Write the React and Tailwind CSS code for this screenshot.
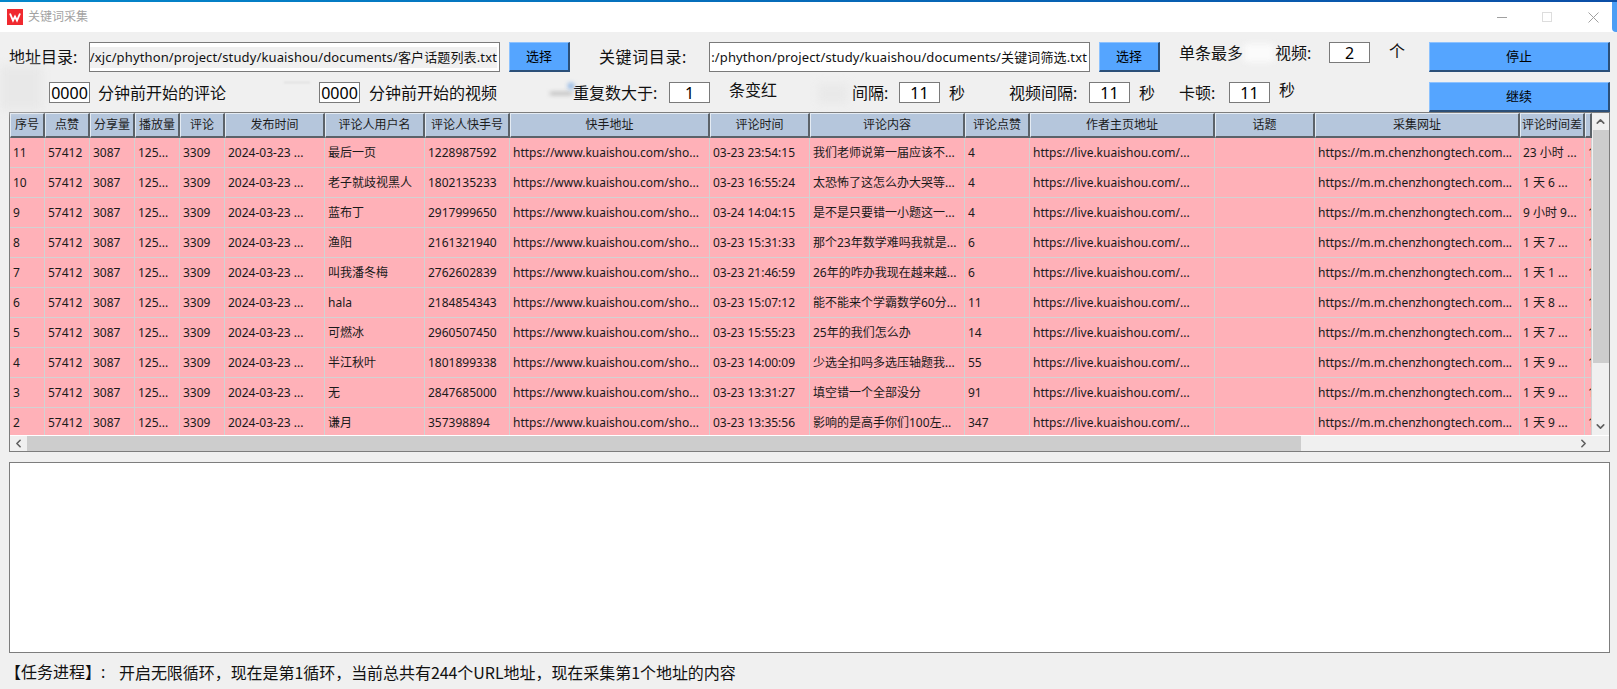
import { ChevronUp, ChevronDown, ChevronLeft, ChevronRight } from "lucide-react";

const columns = [
  { title: "序号", w: "w-[35px]" },
  { title: "点赞", w: "w-[45px]" },
  { title: "分享量", w: "w-[45px]" },
  { title: "播放量", w: "w-[45px]" },
  { title: "评论", w: "w-[45px]" },
  { title: "发布时间", w: "w-[100px]" },
  { title: "评论人用户名", w: "w-[100px]" },
  { title: "评论人快手号", w: "w-[85px]" },
  { title: "快手地址", w: "w-[200px]" },
  { title: "评论时间", w: "w-[100px]" },
  { title: "评论内容", w: "w-[155px]" },
  { title: "评论点赞", w: "w-[65px]" },
  { title: "作者主页地址", w: "w-[185px]" },
  { title: "话题", w: "w-[100px]" },
  { title: "采集网址", w: "w-[205px]" },
  { title: "评论时间差", w: "w-[65px]" },
  { title: "", w: "w-[7px]" },
];

// id, user, kuaishou id, comment time, comment, likes, time diff
const rows = [
  ["11", "最后一页", "1228987592", "03-23 23:54:15", "我们老师说第一届应该不...", "4", "23 小时 ..."],
  ["10", "老子就歧视黑人", "1802135233", "03-23 16:55:24", "太恐怖了这怎么办大哭等...", "4", "1 天 6 ..."],
  ["9", "蓝布丁", "2917999650", "03-24 14:04:15", "是不是只要错一小题这一...", "4", "9 小时 9..."],
  ["8", "渔阳", "2161321940", "03-23 15:31:33", "那个23年数学难吗我就是...", "6", "1 天 7 ..."],
  ["7", "叫我潘冬梅", "2762602839", "03-23 21:46:59", "26年的咋办我现在越来越...", "6", "1 天 1 ..."],
  ["6", "hala", "2184854343", "03-23 15:07:12", "能不能来个学霸数学60分...", "11", "1 天 8 ..."],
  ["5", "可燃冰", "2960507450", "03-23 15:55:23", "25年的我们怎么办", "14", "1 天 7 ..."],
  ["4", "半江秋叶", "1801899338", "03-23 14:00:09", "少选全扣吗多选压轴题我...", "55", "1 天 9 ..."],
  ["3", "无", "2847685000", "03-23 13:31:27", "填空错一个全部没分", "91", "1 天 9 ..."],
  ["2", "谦月", "357398894", "03-23 13:35:56", "影响的是高手你们100左...", "347", "1 天 9 ..."],
];

const statusText = "开启无限循环\uFF0C现在是第1循环\uFF0C当前总共有244个URL地址\uFF0C现在采集第1个地址的内容";

function toCells(r) {
  return [
    r[0], "57412", "3087", "125...", "3309", "2024-03-23 ...", r[1], r[2],
    "https://www.kuaishou.com/sho...", r[3], r[4], r[5],
    "https://live.kuaishou.com/...", "", "https://m.m.chenzhongtech.com...", r[6], "1",
  ];
}

function Btn({ children, className }) {
  return (
    <button className={`h-[30px] shrink-0 bg-[#55a5ff] text-[13px] text-black border-t border-l border-t-[#8cc2ff] border-l-[#8cc2ff] border-r-2 border-b-2 border-r-[#2b4f78] border-b-[#2b4f78] ${className}`}>
      {children}
    </button>
  );
}

function NumBox({ children }) {
  return (
    <div className="h-[21px] w-[41px] shrink-0 bg-white border border-[#7a7a7a] flex items-center justify-center text-[16px] leading-none text-black">
      {children}
    </div>
  );
}

function Label({ children, className = "" }) {
  return <span className={`shrink-0 whitespace-nowrap text-[16px] leading-[21px] text-[#111] ${className}`}>{children}</span>;
}

function PathBox({ children, className = "", selected }) {
  return (
    <div className={`h-[30px] shrink-0 bg-white border border-[#7a7a7a] overflow-hidden flex items-center justify-end px-[2px] ${className}`}>
      <span className={`whitespace-nowrap text-[13px] tracking-[0.13px] leading-[21px] text-[#111] ${selected ? "bg-[#f0f0f0]" : ""}`}>{children}</span>
    </div>
  );
}

export default function App() {
  return (
    <div className="relative w-[1617px] h-[689px] overflow-hidden bg-[#f0f0f0] font-['Noto_Sans','Noto_Sans_CJK_SC',sans-serif]">
      {/* title bar */}
      <div className="h-[2px] bg-gradient-to-r from-[#0487cb] to-[#0b4ea6]" />
      <div className="h-[30px] bg-white flex items-center">
        <svg className="ml-[7px] w-4 h-4 shrink-0" viewBox="0 0 16 16">
          <rect width="16" height="16" fill="#f0292f" />
          <path d="M3 4.5 L6 11.5 L8 7.5 L10 11.5 L13 4.5" fill="none" stroke="#fff" strokeWidth="1.9" />
        </svg>
        <span className="ml-[5px] text-[12px] text-[#a3a3a3]">关键词采集</span>
        <div className="ml-auto flex items-center h-full">
          <div className="w-[10px] h-px bg-[#a0a0a0]" />
          <div className="ml-[35px] w-[10px] h-[10px] border border-[#dddddd]" />
          <svg className="ml-[36px] w-[11px] h-[11px]" viewBox="0 0 11 11">
            <path d="M0.5 0.5 L10.5 10.5 M10.5 0.5 L0.5 10.5" stroke="#a0a0a0" strokeWidth="1" />
          </svg>
          <div className="ml-[13px] w-[5px] h-full rounded-bl-[4px] bg-[#4c9ef5]" />
        </div>
      </div>

      {/* first row of controls */}
      <div className="mt-[10px] h-[30px] flex items-start pl-[9px]">
        <Label className="w-[80px] leading-[30px]">地址目录:</Label>
        <PathBox className="w-[411px]" selected>/xjc/phython/project/study/kuaishou/documents/客户话题列表.txt</PathBox>
        <Btn className="ml-[9px] w-[61px]">选择</Btn>
        <Label className="ml-[29px] w-[110px] leading-[30px] tracking-[0.6px]">关键词目录:</Label>
        <PathBox className="w-[381px]">:/phython/project/study/kuaishou/documents/关键词筛选.txt</PathBox>
        <Btn className="ml-[9px] w-[61px]">选择</Btn>
        <Label className="ml-[19px] w-[96px] mt-[1px]">单条最多</Label>
        <Label className="w-[54px] mt-[1px]">视频:</Label>
        <NumBox>2</NumBox>
        <Label className="ml-[19px] w-[40px] -mt-[1px]">个</Label>
        <Btn className="w-[181px]">停止</Btn>
      </div>

      {/* second row of controls */}
      <div className="mt-[10px] h-[30px] flex items-start pl-[49px]">
        <NumBox>0000</NumBox>
        <Label className="ml-[8px] w-[221px] mt-[1px]">分钟前开始的评论</Label>
        <NumBox>0000</NumBox>
        <Label className="ml-[9px] w-[204px] mt-[1px]">分钟前开始的视频</Label>
        <Label className="w-[96px] mt-[1px]">重复数大于:</Label>
        <NumBox>1</NumBox>
        <Label className="ml-[19px] w-[123px] -mt-[2px]">条变红</Label>
        <Label className="w-[47px] mt-[1px]">间隔:</Label>
        <NumBox>11</NumBox>
        <Label className="ml-[9px] w-[60px] mt-[1px]">秒</Label>
        <Label className="w-[80px] mt-[1px]">视频间隔:</Label>
        <NumBox>11</NumBox>
        <Label className="ml-[9px] w-[40px] mt-[1px]">秒</Label>
        <Label className="w-[50px] mt-[1px]">卡顿:</Label>
        <NumBox>11</NumBox>
        <Label className="ml-[9px] w-[150px] -mt-[2px]">秒</Label>
        <Btn className="w-[181px]">继续</Btn>
      </div>

      {/* table */}
      <div className="ml-[9px] w-[1601px] h-[340px] border border-[#7d7d7d] bg-[#f0f0f0]">
        <div className="flex h-[322px]">
          <div className="w-[1582px] overflow-hidden">
            <div className="flex h-[25px] w-max">
              {columns.map((c, i) => (
                <div key={i} className={`${c.w} shrink-0 h-full bg-[#b5c6dc] flex items-center justify-center whitespace-nowrap text-[12px] text-[#1c1c1c] border-t border-l border-t-[#e4ebf3] border-l-[#e4ebf3] border-r-2 border-b-2 border-r-[#5b6269] border-b-[#5b6269]`}>
                  {c.title}
                </div>
              ))}
            </div>
            <div className="h-[297px] overflow-hidden">
              {rows.map((r) => (
                <div key={r[0]} className="flex h-[30px] w-max">
                  {toCells(r).map((text, i) => (
                    <div key={i} className={`${columns[i].w} shrink-0 h-full bg-[#ffb1b8] border-r border-b border-[#d2d2d2] pl-[3px] overflow-hidden flex items-center whitespace-nowrap text-[12px] text-[#1a1a1a]`}>
                      {text}
                    </div>
                  ))}
                </div>
              ))}
            </div>
          </div>
          {/* vertical scrollbar */}
          <div className="w-[17px] flex flex-col items-center">
            <div className="h-[17px] flex items-center justify-center">
              <ChevronUp size={13} strokeWidth={3} className="text-[#606060]" />
            </div>
            <div className="w-[16px] h-[233px] bg-[#cdcdcd]" />
            <div className="mt-auto h-[17px] flex items-center justify-center">
              <ChevronDown size={13} strokeWidth={3} className="text-[#606060]" />
            </div>
          </div>
        </div>
        {/* horizontal scrollbar */}
        <div className="h-[16px] flex border-t border-white">
          <div className="w-[1582px] flex">
            <div className="w-[17px] flex items-center justify-center">
              <ChevronLeft size={13} strokeWidth={3} className="text-[#606060]" />
            </div>
            <div className="w-[1274px] bg-[#cdcdcd]" />
            <div className="ml-auto w-[17px] flex items-center justify-center">
              <ChevronRight size={13} strokeWidth={3} className="text-[#606060]" />
            </div>
          </div>
        </div>
      </div>

      {/* log box */}
      <div className="mt-[10px] ml-[9px] w-[1601px] h-[191px] bg-white border border-[#7d7d7d]" />

      {/* status line */}
      <div className="mt-[8px] pl-[5px] flex items-center h-[22px] text-[16px] text-[#111] whitespace-nowrap">
        <span className="w-[114px]">【任务进程】:</span>
        <span className="font-['Noto_Sans_CJK_SC','Noto_Sans',sans-serif] tracking-[-0.05px]">{statusText}</span>
      </div>

      {/* smudges left over in the screenshot background */}
      <div className="absolute left-0 top-[66px] w-[42px] h-[44px] bg-[#e8e8e8] blur-[5px]" />
      <div className="absolute left-[284px] top-[82px] w-[26px] h-px bg-[#d4d4d4] blur-[1px]" />
      <div className="absolute left-[550px] top-[92px] w-[22px] h-[3px] bg-[#b5b5b5] blur-[2px]" />
      <div className="absolute left-[568px] top-[83px] w-[6px] h-[6px] bg-[#8fb6e6] blur-[2px]" />
      <div className="absolute left-[818px] top-[84px] w-[30px] h-[20px] bg-[#e9e9e9] blur-[4px]" />
      <div className="absolute left-[1244px] top-[44px] w-[30px] h-[18px] bg-[#fbfbfb] blur-[3px]" />
    </div>
  );
}
